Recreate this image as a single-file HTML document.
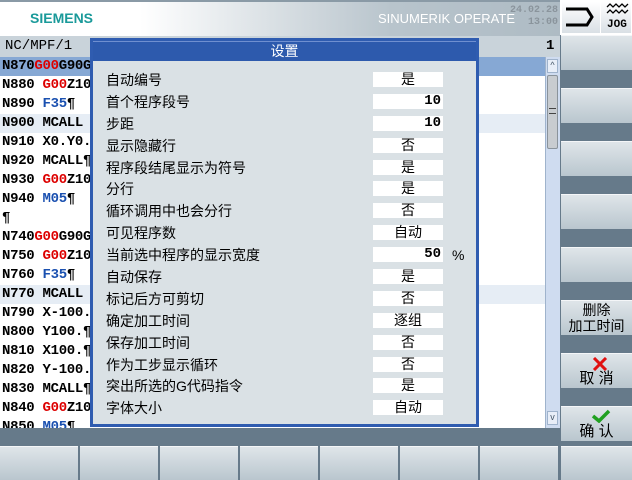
<!DOCTYPE html><html><head><meta charset="utf-8"><style>
*{margin:0;padding:0;box-sizing:border-box}
body{width:632px;height:480px;overflow:hidden;background:#667a8a;position:relative;font-family:"Liberation Sans","Noto Sans CJK SC",sans-serif}
.a{position:absolute}
.sk{position:absolute;background:linear-gradient(#dfe5e9,#b9c6ce);border-top:1px solid #f4f6f8}
.code{font-family:"Liberation Mono","Noto Sans CJK SC",monospace;font-weight:bold;font-size:14px;color:#000;white-space:pre;height:19px;line-height:19px;padding-left:2px;width:545px;letter-spacing:-0.3px}
.r{color:#d00}.b{color:#1a50b0}
.lab{position:absolute;left:106px;font-size:14px;color:#000;line-height:16px}
.val{position:absolute;left:373px;width:70px;height:15px;background:#fff;font-size:14px;line-height:15px;text-align:center}
.num{text-align:right;font-family:"Liberation Mono",monospace;font-weight:bold;padding-right:2px}
</style></head><body>
<div class="a" style="left:0;top:0;width:560px;height:36px;background:linear-gradient(90deg,#fff 0%,#fff 25%,#b8c4cc 70%,#aebbc4 100%);border-top:2px solid #8a9aa6"></div>
<div class="a" style="left:30px;top:10px;font-size:14px;font-weight:bold;color:#1a9a9a">SIEMENS</div>
<div class="a" style="left:378px;top:11px;font-size:13px;color:#fff">SINUMERIK OPERATE</div>
<div class="a" style="right:74px;top:5px;font-size:10px;color:#8a949c;font-family:'Liberation Mono',monospace;font-weight:bold;line-height:12px;text-align:right">24.02.28<br>13:00</div>
<div class="a" style="left:560px;top:0;width:72px;height:35px;background:#fff"></div>
<div class="a" style="left:562px;top:2px;width:38px;height:31px;background:linear-gradient(#fff,#d9e0e5)"></div>
<svg class="a" style="left:565px;top:6px" width="30" height="22"><path d="M1 3H22L27 11L22 19H1" fill="none" stroke="#000" stroke-width="3"/></svg>
<div class="a" style="left:601px;top:2px;width:30px;height:31px;background:linear-gradient(#fff,#d9e0e5)"></div>
<svg class="a" style="left:605px;top:3px" width="24" height="16"><path d="M2 4l3-3 3 3 3-3 3 3 3-3 3 3 3-3M2 10l3-3 3 3 3-3 3 3 3-3 3 3 3-3" fill="none" stroke="#000" stroke-width="1.3"/></svg>
<div class="a" style="left:607px;top:19px;font-size:11px;font-weight:bold;font-family:'Liberation Mono',monospace">JOG</div>

<div class="a" style="left:0;top:36px;width:560px;height:21px;background:#c9d3da"></div>
<div class="a" style="left:5px;top:38px;font-size:14px;font-family:'Liberation Mono',monospace">NC/MPF/1</div>
<div class="a" style="left:546px;top:38px;font-size:14px;font-weight:bold;font-family:'Liberation Mono',monospace">1</div>
<div class="a" style="left:0;top:57px;width:545px;height:371px;background:#fff;overflow:hidden">
<div class="code" style="background:#86a8d4">N870<span class="r">G00</span>G90G</div>
<div class="code">N880 <span class="r">G00</span>Z10</div>
<div class="code">N890 <span class="b">F35</span>¶</div>
<div class="code" style="background:#e6edf5">N900 MCALL</div>
<div class="code">N910 X0.Y0.</div>
<div class="code">N920 MCALL¶</div>
<div class="code">N930 <span class="r">G00</span>Z10</div>
<div class="code">N940 <span class="b">M05</span>¶</div>
<div class="code">¶</div>
<div class="code">N740<span class="r">G00</span>G90G</div>
<div class="code">N750 <span class="r">G00</span>Z10</div>
<div class="code">N760 <span class="b">F35</span>¶</div>
<div class="code" style="background:#e6edf5">N770 MCALL</div>
<div class="code">N790 X-100.</div>
<div class="code">N800 Y100.¶</div>
<div class="code">N810 X100.¶</div>
<div class="code">N820 Y-100.</div>
<div class="code">N830 MCALL¶</div>
<div class="code">N840 <span class="r">G00</span>Z10</div>
<div class="code">N850 <span class="b">M05</span>¶</div>
</div>
<div class="a" style="left:545px;top:57px;width:15px;height:371px;background:#cfdcf0;border-left:1px solid #9fb3cc"></div>
<div class="a" style="left:547px;top:59px;width:11px;height:14px;background:#e8eef8;border:1px solid #9fb3cc;font-size:9px;text-align:center;color:#456">^</div>
<div class="a" style="left:547px;top:75px;width:11px;height:74px;background:#c8ccd0;border:1px solid #8a939b;border-radius:2px"></div>
<div class="a" style="left:549px;top:108px;width:7px;height:6px;border-top:1px solid #444;border-bottom:1px solid #444"></div>
<div class="a" style="left:547px;top:411px;width:11px;height:14px;background:#e8eef8;border:1px solid #9fb3cc;font-size:9px;text-align:center;color:#456">v</div>

<div class="a" style="left:90px;top:38px;width:389px;height:389px;background:#dae1e5;border:3px solid #2f5cb0"></div>
<div class="a" style="left:93px;top:41px;width:383px;height:20px;background:#2d5aad;border-top:1px solid #6f8fd0;color:#fff;font-size:14px;text-align:center;line-height:19px">设置</div>

<div class="lab" style="top:72px">自动编号</div><div class="val" style="top:72px">是</div>
<div class="lab" style="top:94px">首个程序段号</div><div class="val num" style="top:94px">10</div>
<div class="lab" style="top:116px">步距</div><div class="val num" style="top:116px">10</div>
<div class="lab" style="top:138px">显示隐藏行</div><div class="val" style="top:138px">否</div>
<div class="lab" style="top:160px">程序段结尾显示为符号</div><div class="val" style="top:160px">是</div>
<div class="lab" style="top:181px">分行</div><div class="val" style="top:181px">是</div>
<div class="lab" style="top:203px">循环调用中也会分行</div><div class="val" style="top:203px">否</div>
<div class="lab" style="top:225px">可见程序数</div><div class="val" style="top:225px">自动</div>
<div class="lab" style="top:247px">当前选中程序的显示宽度</div><div class="val num" style="top:247px">50</div>
<div class="a" style="left:452px;top:247px;font-size:14px">%</div>
<div class="lab" style="top:269px">自动保存</div><div class="val" style="top:269px">是</div>
<div class="lab" style="top:291px">标记后方可剪切</div><div class="val" style="top:291px">否</div>
<div class="lab" style="top:313px">确定加工时间</div><div class="val" style="top:313px">逐组</div>
<div class="lab" style="top:335px">保存加工时间</div><div class="val" style="top:335px">否</div>
<div class="lab" style="top:357px">作为工步显示循环</div><div class="val" style="top:357px">否</div>
<div class="lab" style="top:378px">突出所选的G代码指令</div><div class="val" style="top:378px">是</div>
<div class="lab" style="top:400px">字体大小</div><div class="val" style="top:400px">自动</div>

<div class="sk" style="left:561px;top:35px;width:71px;height:35px"></div>
<div class="sk" style="left:561px;top:88px;width:71px;height:35px"></div>
<div class="sk" style="left:561px;top:141px;width:71px;height:35px"></div>
<div class="sk" style="left:561px;top:194px;width:71px;height:35px"></div>
<div class="sk" style="left:561px;top:247px;width:71px;height:35px"></div>
<div class="sk" style="left:561px;top:300px;width:71px;height:35px;font-size:14px;text-align:center;line-height:16px;padding-top:1px">删除<br>加工时间</div>
<div class="sk" style="left:561px;top:353px;width:71px;height:35px;font-size:15px;text-align:center;padding-top:16px;line-height:18px">取 消</div>
<svg class="a" style="left:592px;top:357px" width="16" height="14"><path d="M2 1L14 13M14 1L2 13" stroke="#e01010" stroke-width="3"/></svg>
<div class="sk" style="left:561px;top:406px;width:71px;height:35px;font-size:15px;text-align:center;padding-top:16px;line-height:18px">确 认</div>
<svg class="a" style="left:591px;top:409px" width="20" height="14"><path d="M2 7L8 12L18 2" fill="none" stroke="#20a020" stroke-width="3.5"/></svg>

<div class="sk" style="left:0;top:446px;width:78px;height:34px"></div>
<div class="sk" style="left:80px;top:446px;width:78px;height:34px"></div>
<div class="sk" style="left:160px;top:446px;width:78px;height:34px"></div>
<div class="sk" style="left:240px;top:446px;width:78px;height:34px"></div>
<div class="sk" style="left:320px;top:446px;width:78px;height:34px"></div>
<div class="sk" style="left:400px;top:446px;width:78px;height:34px"></div>
<div class="sk" style="left:480px;top:446px;width:78px;height:34px"></div>
<div class="sk" style="left:561px;top:446px;width:71px;height:34px"></div>
</body></html>
